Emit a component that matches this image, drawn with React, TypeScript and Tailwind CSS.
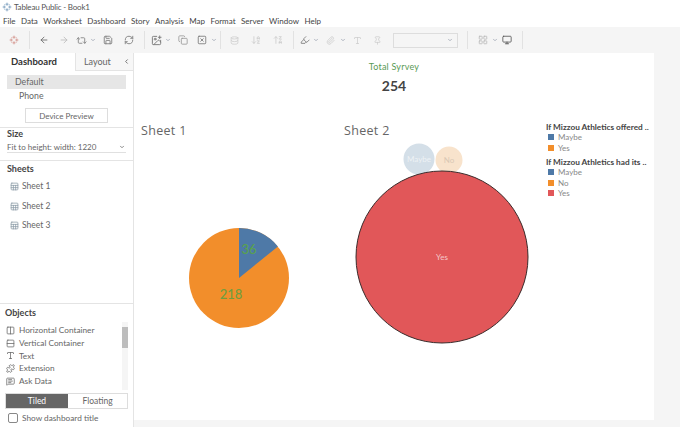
import {
  ArrowLeft,
  ArrowRight,
  ChevronDown,
  ChevronLeft,
  Columns2,
  Copy,
  Database,
  Highlighter,
  ImagePlus,
  LayoutGrid,
  MessageSquareText,
  Monitor,
  Pin,
  Puzzle,
  RefreshCw,
  Repeat2,
  Rows2,
  Save,
  ArrowDownAZ,
  ArrowUpZA,
  Paperclip,
  Type,
  SquareX,
  Sheet,
} from "lucide-react";

const menus = ["File", "Data", "Worksheet", "Dashboard", "Story", "Analysis", "Map", "Format", "Server", "Window", "Help"];

const objects = [
  { icon: Columns2, label: "Horizontal Container" },
  { icon: Rows2, label: "Vertical Container" },
  { icon: Type, label: "Text" },
  { icon: Puzzle, label: "Extension" },
  { icon: MessageSquareText, label: "Ask Data" },
];

function TableauMark({ size, color }: { size: number; color: string }) {
  return (
    <svg width={size} height={size} viewBox="0 0 16 16" stroke={color} strokeWidth="1.2" fill="none">
      <path d="M8 1v5M5.5 3.5h5M8 10v5M5.5 12.5h5M1 8h5M3.5 5.5v5M10 8h5M12.5 5.5v5M4 4l1 1M12 4l-1 1M4 12l1-1M12 12l-1-1" />
    </svg>
  );
}

function Dot() {
  return <ChevronDown size={6} strokeWidth={3} className="text-gray-400" />;
}

function Sep() {
  return <div className="w-px h-[18px] bg-[#e2e2e2]" />;
}

function SheetRow({ name }: { name: string }) {
  return (
    <div className="h-[19.5px] flex items-center gap-[3px] pl-[10px] text-[#666]">
      <Sheet size={9} className="text-[#8a9aa5]" />
      <span className="text-[8.5px]">{name}</span>
    </div>
  );
}

function LegendRow({ color, label }: { color: string; label: string }) {
  return (
    <div className="h-[10.5px] flex items-center gap-[4px] pl-[2px] text-[#888] text-[8px]">
      <span className={`w-[6px] h-[6px] ${color}`} />
      {label}
    </div>
  );
}

export default function App() {
  return (
    <div className="w-[680px] h-[427px] overflow-hidden bg-white flex flex-col font-['Lato','Liberation_Sans',sans-serif] text-[#333]">
      {/* Title bar */}
      <div className="h-[14px] flex items-center gap-[2px] pl-[2px] text-[8px] tracking-[-0.2px] text-[#555]">
        <TableauMark size={10} color="#6b93b5" />
        <span>Tableau Public - Book1</span>
      </div>

      {/* Menu bar */}
      <div className="h-[13px] flex items-center gap-[5.5px] pl-[3px] text-[8px] text-[#444]">
        {menus.map((m) => (
          <span key={m}>{m}</span>
        ))}
      </div>

      {/* Toolbar */}
      <div className="h-[26px] bg-[#f5f5f5] flex items-center pl-[9px] text-[#8a8a8a]">
        <TableauMark size={10} color="#d08a80" />
        <div className="ml-[10px]"><Sep /></div>
        <ArrowLeft size={10} className="ml-[9px] text-[#666]" />
        <ArrowRight size={10} className="ml-[10px] text-[#bbb]" />
        <Repeat2 size={11} className="ml-[7px] text-[#888]" />
        <div className="ml-[3px]"><Dot /></div>
        <Save size={10} className="ml-[7px] text-[#777]" />
        <RefreshCw size={10} className="ml-[11px] text-[#777]" />
        <div className="ml-[10px]"><Sep /></div>
        <ImagePlus size={11} className="ml-[6px] text-[#777]" />
        <div className="ml-[3px]"><Dot /></div>
        <Copy size={10} className="ml-[7px] text-[#999]" />
        <SquareX size={10} className="ml-[9px] text-[#777]" />
        <div className="ml-[4px]"><Dot /></div>
        <div className="ml-[3px]"><Sep /></div>
        <Database size={9} className="ml-[9px] text-[#ccc]" />
        <ArrowDownAZ size={10} className="ml-[12px] text-[#ccc]" />
        <ArrowUpZA size={10} className="ml-[12px] text-[#ccc]" />
        <div className="ml-[10px]"><Sep /></div>
        <Highlighter size={10} className="ml-[6px] text-[#777]" />
        <div className="ml-[3px]"><Dot /></div>
        <Paperclip size={9} className="ml-[7px] text-[#ccc]" />
        <div className="ml-[5px]"><Dot /></div>
        <Type size={9} className="ml-[7px] text-[#ccc]" />
        <Pin size={9} className="ml-[11px] text-[#ccc]" />
        <div className="ml-[11px] w-[65px] h-[15px] bg-[#f5f5f5] border border-[#ddd] flex items-center justify-end pr-[4px]">
          <Dot />
        </div>
        <div className="ml-[9px]"><Sep /></div>
        <LayoutGrid size={10} className="ml-[10px] text-[#bbb]" />
        <div className="ml-[4px]"><Dot /></div>
        <Monitor size={10} className="ml-[4px] text-[#555]" />
        <div className="ml-[10px]"><Sep /></div>
      </div>

      <div className="flex-1 flex min-h-0">
        {/* Sidebar */}
        <aside className="w-[134px] shrink-0 border-r border-[#e4e4e4] flex flex-col text-[9px] text-[#666]">
          <div className="h-[18px] flex items-center">
            <div className="w-[75px] pl-[11px] font-bold text-[#333] text-[9.5px]">Dashboard</div>
            <div className="flex-1 h-full bg-[#f7f7f7] border-l border-b border-[#e4e4e4] flex items-center justify-between pl-[8px] pr-[3px] text-[#666] text-[9px]">
              Layout
              <ChevronLeft size={7} strokeWidth={3} />
            </div>
          </div>
          <div className="mt-[4px] mx-[7px] h-[14px] bg-[#e6e6e6] pl-[8px] flex items-center text-[8.75px]">Default</div>
          <div className="h-[13px] pl-[19px] flex items-center text-[8.75px]">Phone</div>
          <div className="mt-[6px] mx-[25px] h-[15px] border border-[#ddd] flex items-center justify-center text-[8px]">Device Preview</div>
          <div className="mt-[4px] border-t border-[#e4e4e4] px-[7px]">
            <div className="font-bold text-[#444] text-[9px] h-[13px] leading-[12px]">Size</div>
            <div className="h-[12px] flex items-center justify-between border-b border-[#e0e0e0] text-[8px] pr-[1px]">
              Fit to height: width: 1220
              <ChevronDown size={6} strokeWidth={3} />
            </div>
          </div>
          <div className="mt-[7px] border-t border-[#e4e4e4] px-[7px] pt-[1px]">
            <div className="font-bold text-[#444] text-[9px] h-[14px]">Sheets</div>
          </div>
          <div className="mt-[1px]">
            <SheetRow name="Sheet 1" />
            <SheetRow name="Sheet 2" />
            <SheetRow name="Sheet 3" />
          </div>
          <div className="mt-auto border-t border-[#e4e4e4] pt-[1px] relative">
            <div className="font-bold text-[#444] text-[9px] pl-[5px] h-[19px] leading-[13px] pt-[1px]">Objects</div>
            <div className="flex">
              <div className="flex-1 pl-[6px]">
                {objects.map((o) => {
                  const Icon = o.icon;
                  return (
                    <div key={o.label} className="h-[12.7px] flex items-center gap-[4px] text-[8.25px] whitespace-nowrap">
                      <Icon size={9} />
                      {o.label}
                    </div>
                  );
                })}
              </div>
              <div className="w-[6px] mr-[5px] -mt-[2px] h-[68px] bg-[#f5f5f5]">
                <div className="mt-[5px] h-[21px] bg-[#bdbdbd]" />
              </div>
            </div>
            <div className="mt-[3px] mx-[5px] h-[16px] flex border border-[#ddd] text-[8.5px]">
              <div className="w-[62px] bg-[#666] text-white flex items-center justify-center">Tiled</div>
              <div className="flex-1 flex items-center justify-center">Floating</div>
            </div>
            <div className="h-[18px] pl-[8px] flex items-center gap-[4px] text-[8.25px]">
              <span className="w-[10px] h-[10px] border border-[#888] rounded-[2px] bg-white" />
              Show dashboard title
            </div>
          </div>
        </aside>

        {/* Dashboard canvas */}
        <main className="flex-1 min-w-0 bg-[#f5f5f5] pb-[7px] pr-[26px]">
          <div className="h-full bg-white flex flex-col">
            <div className="h-[63px] w-[520px] flex flex-col items-center pt-[7px]">
              <div className="text-[9px] text-[#5a9a55] tracking-wide">Total Syrvey</div>
              <div className="mt-[1px] text-[14px] font-bold text-[#444]">254</div>
            </div>
            <div className="flex-1 flex pt-[6px]">
              <div className="w-[203px] pl-[7px]">
                <div className="text-[12.5px] text-[#666] tracking-wide font-['Open_Sans']">Sheet 1</div>
                <svg width="196" height="110" className="mt-[81px] -ml-[7px]" viewBox="0 0 196 110">
                  <circle cx="105" cy="56" r="50" fill="#f28e2b" />
                  <path d="M105 56 L105 6 A50 50 0 0 1 143.9 24.5 Z" fill="#4e79a7" />
                  <text x="115" y="32" textAnchor="middle" fontSize="13" fontWeight="500" fill="#59a14f">36</text>
                  <text x="97" y="77" textAnchor="middle" fontSize="13" fontWeight="500" fill="#6f9e3f">218</text>
                </svg>
              </div>
              <div className="w-[203px] pl-[7px]">
                <div className="text-[12.5px] text-[#666] tracking-wide font-['Open_Sans']">Sheet 2</div>
                <svg width="196" height="205" className="mt-[2px]" viewBox="0 0 196 205">
                  <circle cx="75" cy="16" r="15.5" fill="#d4dfe8" />
                  <text x="75" y="19" textAnchor="middle" fontSize="8" fill="#eef2f5">Maybe</text>
                  <circle cx="105" cy="17" r="13.5" fill="#f8e3cc" />
                  <text x="105" y="20" textAnchor="middle" fontSize="8" fill="#d9c8b5">No</text>
                  <circle cx="98" cy="114" r="86" fill="#e15759" stroke="#3a2a2a" strokeWidth="1" />
                  <text x="98" y="117" textAnchor="middle" fontSize="8" fill="#f4c9ca">Yes</text>
                </svg>
              </div>
              <div className="flex-1 ml-[6px]">
                <div className="font-bold text-[8.25px] h-[10px] leading-[10px] text-[#444] whitespace-nowrap">If Mizzou Athletics offered ..</div>
                <LegendRow color="bg-[#4e79a7]" label="Maybe" />
                <LegendRow color="bg-[#f28e2b]" label="Yes" />
                <div className="mt-[4px] font-bold text-[8.25px] h-[10px] leading-[10px] text-[#444] whitespace-nowrap">If Mizzou Athletics had its ..</div>
                <LegendRow color="bg-[#4e79a7]" label="Maybe" />
                <LegendRow color="bg-[#f28e2b]" label="No" />
                <LegendRow color="bg-[#e15759]" label="Yes" />
              </div>
            </div>
          </div>
        </main>
      </div>
    </div>
  );
}
